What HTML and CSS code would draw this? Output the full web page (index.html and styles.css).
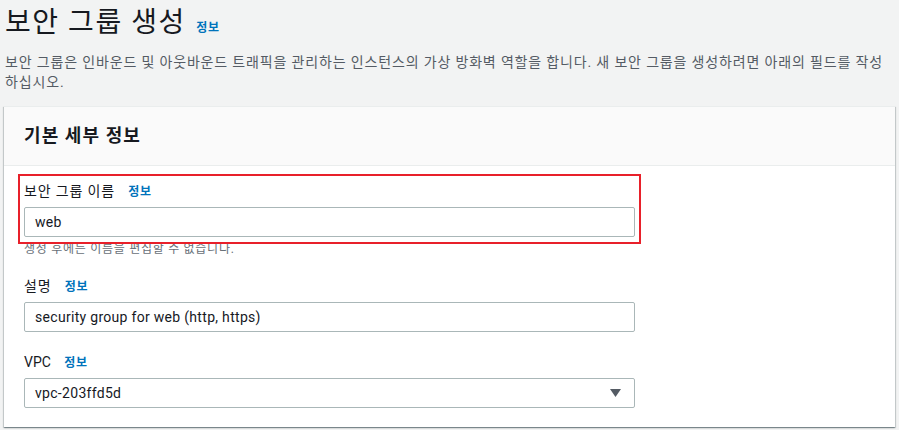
FILE: index.html
```html
<!DOCTYPE html>
<html lang="ko">
<head>
<meta charset="utf-8">
<link rel="stylesheet" href="styles.css">
</head>
<body>
<div class="page">
  <h1 class="title">보안 그룹 생성 <a class="info info-title">정보</a></h1>
  <p class="desc">보안 그룹은 인바운드 및 아웃바운드 트래픽을 관리하는 인스턴스의 가상 방화벽 역할을 합니다. 새 보안 그룹을 생성하려면 아래의 필드를 작성하십시오.</p>
  <section class="card">
    <div class="card-header">기본 세부 정보</div>
    <div class="card-body">
      <div class="field field-first">
        <div class="label">보안 그룹 이름 <a class="info">정보</a></div>
        <div class="input">web</div>
        <div class="hint">생성 후에는 이름을 편집할 수 없습니다.</div>
        <div class="highlight"></div>
      </div>
      <div class="field">
        <div class="label">설명 <a class="info">정보</a></div>
        <div class="input">security group for web (http, https)</div>
      </div>
      <div class="field">
        <div class="label"><span class="latin">VPC</span> <a class="info">정보</a></div>
        <div class="input select">
          <span>vpc-203ffd5d</span>
          <svg class="caret" width="11" height="8" viewBox="0 0 11 8"><polygon points="0,0 11,0 5.5,8" fill="#545b64"/></svg>
        </div>
      </div>
    </div>
  </section>
</div>
</body>
</html>
```

FILE: styles.css
```css
* { box-sizing: border-box; }
html, body { margin: 0; padding: 0; }
body {
  background: #f2f3f3;
  font-family: Roboto, "Noto Sans CJK KR", sans-serif;
  color: #16191f;
  width: 899px;
  height: 430px;
  overflow: hidden;
}
.page { padding: 5px 4px 0 4px; }
.title {
  margin: 0;
  font-size: 28px;
  font-weight: 400;
  line-height: 36px;
  padding-left: 1px;
  letter-spacing: 0.055em;
}
.info {
  color: #0073bb;
  font-size: 12px;
  font-weight: 700;
  text-decoration: none;
  letter-spacing: 0.06em;
}
.info-title { margin-left: 2px; }
.desc {
  margin: 6px 0 0 0;
  padding-left: 1px;
  font-size: 14px;
  line-height: 20px;
  color: #545b64;
  letter-spacing: 0.06em;
}
.card {
  margin-top: 14px;
  background: #fff;
  box-shadow: 0 1px 1px 0 rgba(0,28,36,.3), 1px 1px 1px 0 rgba(0,28,36,.15), -1px 1px 1px 0 rgba(0,28,36,.15);
  border-top: 1px solid #eaeded;
}
.card-header {
  background: #fafafa;
  border-bottom: 1px solid #eaeded;
  padding: 18px 20px 18px 20px;
  font-size: 18px;
  font-weight: 700;
  line-height: 22px;
  letter-spacing: 0.06em;
}
.card-body { padding: 15px 20px 19px 20px; }
.field { position: relative; margin-top: 20px; }
.field-first { margin-top: 0; }
.label {
  font-size: 14px;
  line-height: 20px;
  margin-bottom: 5px;
  letter-spacing: 0.06em;
}
.label .latin { letter-spacing: 0; }
.label .info { margin-left: 9px; }
.input {
  width: 611px;
  height: 30px;
  border: 1px solid #aab7b8;
  border-radius: 2px;
  padding: 0 10px;
  font-size: 14px;
  line-height: 28px;
  letter-spacing: 0.3px;
  color: #16191f;
  background: #fff;
}
.select {
  display: flex;
  align-items: center;
  justify-content: space-between;
  padding-right: 13px;
}
.caret { display: block; }
.hint {
  margin-top: 5px;
  font-size: 12px;
  line-height: 14px;
  color: #687078;
  letter-spacing: 0.06em;
}
.highlight {
  position: absolute;
  left: -6px;
  top: -7px;
  width: 623px;
  height: 70px;
  border: 2px solid #e8202a;
}
```
